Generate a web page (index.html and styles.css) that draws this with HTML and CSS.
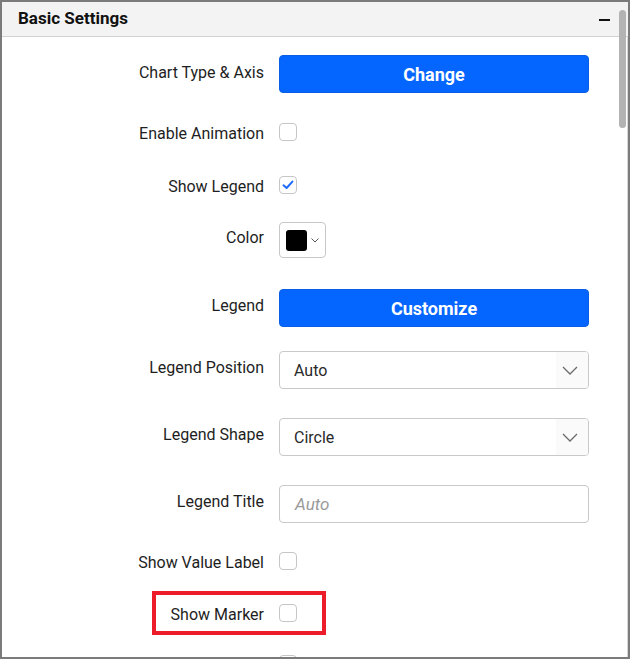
FILE: index.html
```html
<!DOCTYPE html>
<html>
<head>
<meta charset="utf-8">
<link rel="stylesheet" href="styles.css">
</head>
<body>
<div class="frame">
  <div class="header">
    <span class="title">Basic Settings</span>
    <span class="collapse"></span>
  </div>
  <div class="body">
    <div class="rows">
      <div class="row r1">
        <label class="lbl">Chart Type &amp; Axis</label>
        <button class="btn">Change</button>
      </div>
      <div class="row r2">
        <label class="lbl lbl-low">Enable Animation</label>
        <span class="check"></span>
      </div>
      <div class="row r3">
        <label class="lbl lbl-low">Show Legend</label>
        <span class="check">
          <svg viewBox="0 0 18 18" width="18" height="18"><path d="M4.5 9.3 L7.6 12 L13.4 5.6" fill="none" stroke="#1f6bff" stroke-width="2" stroke-linecap="round" stroke-linejoin="round"/></svg>
        </span>
      </div>
      <div class="row r4">
        <label class="lbl lbl-high">Color</label>
        <span class="color">
          <span class="swatch"></span>
          <svg class="mini-chev" viewBox="0 0 8 5" width="8" height="5"><path d="M0.5 0.5 L4 4 L7.5 0.5" fill="none" stroke="#555" stroke-width="1"/></svg>
        </span>
      </div>
      <div class="row r5">
        <label class="lbl lbl-high">Legend</label>
        <button class="btn">Customize</button>
      </div>
      <div class="row r6">
        <label class="lbl lbl-high">Legend Position</label>
        <div class="select"><span class="val">Auto</span><span class="arrow"><svg viewBox="0 0 16 9" width="16" height="9"><path d="M1 1 L8 8 L15 1" fill="none" stroke="#6b6b6b" stroke-width="1.3"/></svg></span></div>
      </div>
      <div class="row r7">
        <label class="lbl lbl-high">Legend Shape</label>
        <div class="select"><span class="val">Circle</span><span class="arrow"><svg viewBox="0 0 16 9" width="16" height="9"><path d="M1 1 L8 8 L15 1" fill="none" stroke="#6b6b6b" stroke-width="1.3"/></svg></span></div>
      </div>
      <div class="row r8">
        <label class="lbl lbl-high">Legend Title</label>
        <div class="input"><span class="ph">Auto</span></div>
      </div>
      <div class="row r9">
        <label class="lbl lbl-low">Show Value Label</label>
        <span class="check"></span>
      </div>
      <div class="row r10">
        <label class="lbl lbl-low">Show Marker</label>
        <span class="check"></span>
        <span class="highlight"></span>
      </div>
      <div class="row r11">
        <label class="lbl"></label>
        <span class="check"></span>
      </div>
    </div>
    <span class="thumb"></span>
  </div>
</div>
</body>
</html>
```

FILE: styles.css
```css
* { box-sizing: border-box; }
html, body { margin: 0; padding: 0; background: #fff; }
body { font-family: Roboto, "Noto Sans", sans-serif; color: #1e1e1e; }

.frame {
  width: 630px;
  height: 659px;
  border: 2px solid #7b7b7b;
  overflow: hidden;
  display: flex;
  flex-direction: column;
  background: #fff;
}

.header {
  height: 35px;
  flex: none;
  background: #f3f3f3;
  border-bottom: 1px solid #d2d2d2;
  display: flex;
  align-items: center;
  justify-content: space-between;
  padding: 0 18px 0 16px;
}
.title {
  font-size: 17px;
  font-weight: 700;
  color: #111;
  margin-top: -2px;
}
.collapse {
  width: 11px;
  height: 2px;
  background: #111;
  margin-top: 1px;
}

.body {
  position: relative;
  flex: 1;
  border-right: 1px solid #d8d8d8;
}
.rows {
  padding-top: 18px;
  display: flex;
  flex-direction: column;
}
.row {
  display: grid;
  grid-template-columns: 262px 310px;
  column-gap: 15px;
  align-items: center;
  position: relative;
}
.lbl {
  text-align: right;
  font-size: 16px;
  line-height: 18px;
  color: #1e1e1e;
}
.lbl-low { position: relative; top: 2px; }
.lbl-high { position: relative; top: -2px; }

.r1 .lbl { position: relative; top: -1px; }
.r2 { margin-top: 30px; }
.r3 { margin-top: 35px; }
.r4 { margin-top: 28px; }
.r5 { margin-top: 31px; }
.r6 { margin-top: 24px; }
.r7 { margin-top: 29px; }
.r8 { margin-top: 29px; }
.r9 { margin-top: 29px; }
.r10 { margin-top: 34px; }
.r11 { margin-top: 33px; }

.btn {
  height: 38px;
  width: 310px;
  border: 1px solid #0a5ee6;
  border-radius: 4px;
  background: #0465ff;
  color: #fff;
  font-family: Roboto, sans-serif;
  font-size: 18px;
  font-weight: 700;
  padding: 0;
}

.check {
  width: 18px;
  height: 18px;
  border: 1px solid #c6c6c6;
  border-radius: 4px;
  background: #fff;
  display: block;
}
.check svg { display: block; margin: -1px; }

.color {
  width: 47px;
  height: 36px;
  border: 1px solid #c8c8c8;
  border-radius: 4px;
  display: flex;
  align-items: center;
  padding-left: 6px;
  gap: 4px;
}
.swatch {
  width: 21px;
  height: 21px;
  background: #000;
  border-radius: 3px;
}
.mini-chev { display: block; margin-top: 1px; }

.select, .input {
  height: 38px;
  width: 310px;
  border: 1px solid #c9c9c9;
  border-radius: 4px;
  display: flex;
  align-items: center;
  background: #fff;
  overflow: hidden;
}
.val {
  flex: 1;
  padding-left: 14px;
  font-size: 16px;
  color: #2a2a2a;
}
.arrow {
  width: 32px;
  height: 100%;
  background: #fafafa;
  display: flex;
  align-items: center;
  justify-content: center;
}
.arrow svg { display: block; margin-right: 4px; margin-top: 1px; }
.ph {
  padding-left: 15px;
  font-size: 17px;
  font-style: italic;
  color: #9a9a9a;
}

.highlight {
  position: absolute;
  left: 150px;
  top: -13px;
  width: 174px;
  height: 44px;
  border: 4px solid #ec1c2b;
}

.thumb {
  position: absolute;
  right: 1px;
  top: -27px;
  width: 7px;
  height: 118px;
  border-radius: 4px;
  background: #b3b3b3;
}
```
